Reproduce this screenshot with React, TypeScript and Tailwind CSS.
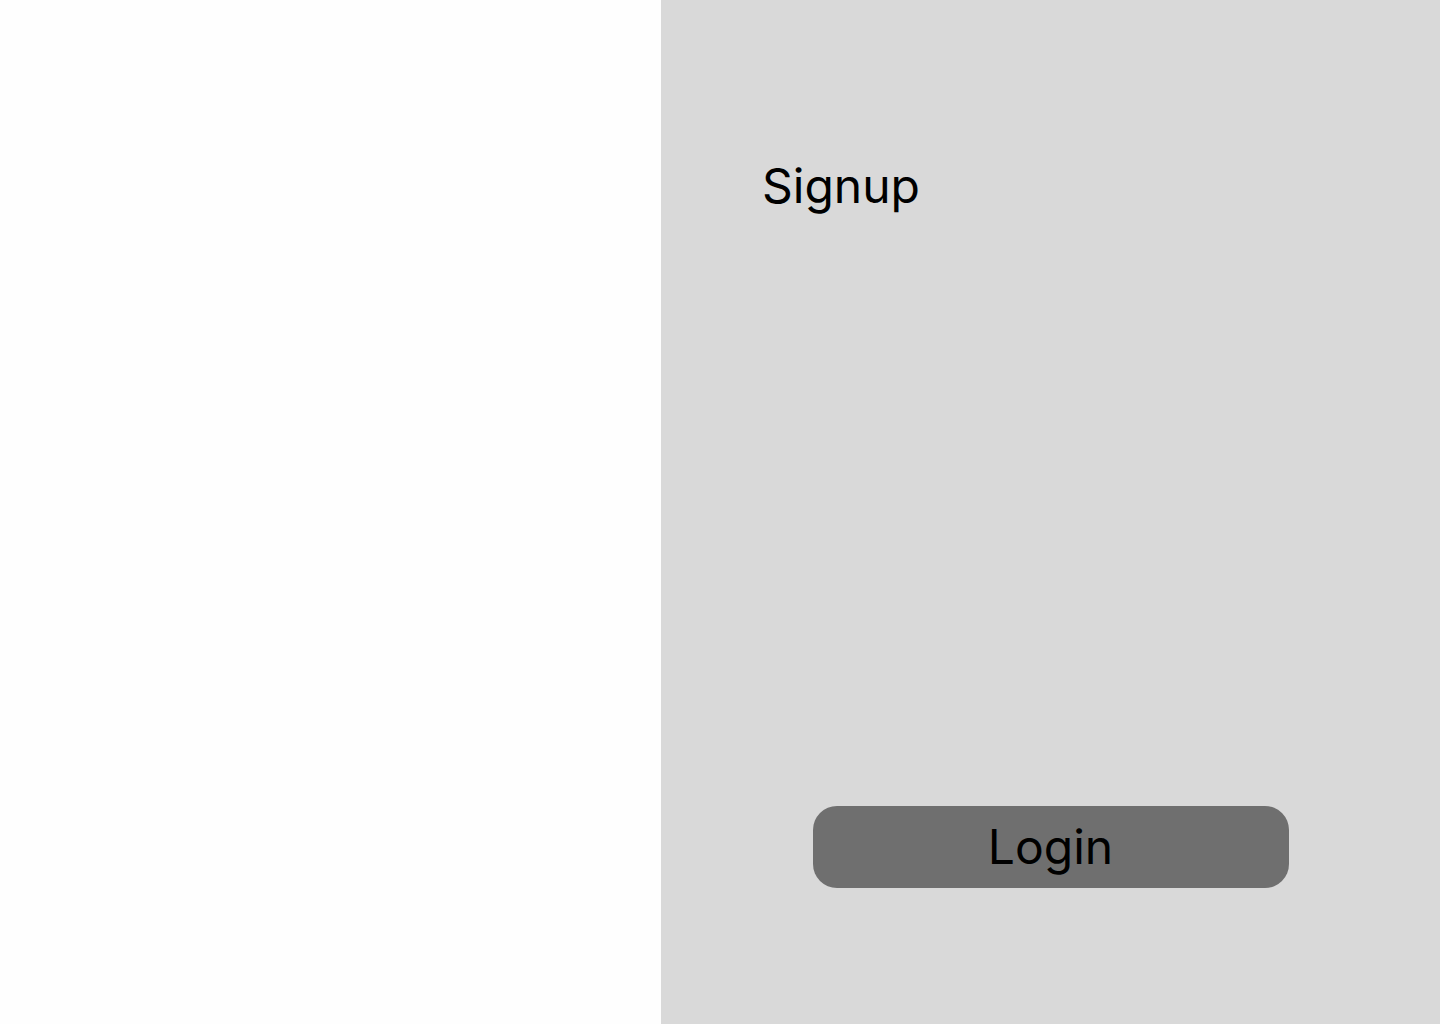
export default function App() {
  return (
    <div className="flex h-[1024px] w-[1440px] overflow-hidden" style={{ fontFamily: "Inter, 'Noto Sans', sans-serif" }}>
      <div className="w-[661px] shrink-0 bg-[#fefefe]" />
      <div className="flex flex-1 flex-col bg-[#d9d9d9] pt-[162px]">
        <div className="pl-[101px] text-[48px] leading-none text-black">Signup</div>
        <button className="mt-[596px] flex h-[82px] w-[476px] items-center justify-center self-center rounded-[24px] bg-[#6f6f6f] text-[48px] leading-none text-black">
          Login
        </button>
      </div>
    </div>
  );
}
